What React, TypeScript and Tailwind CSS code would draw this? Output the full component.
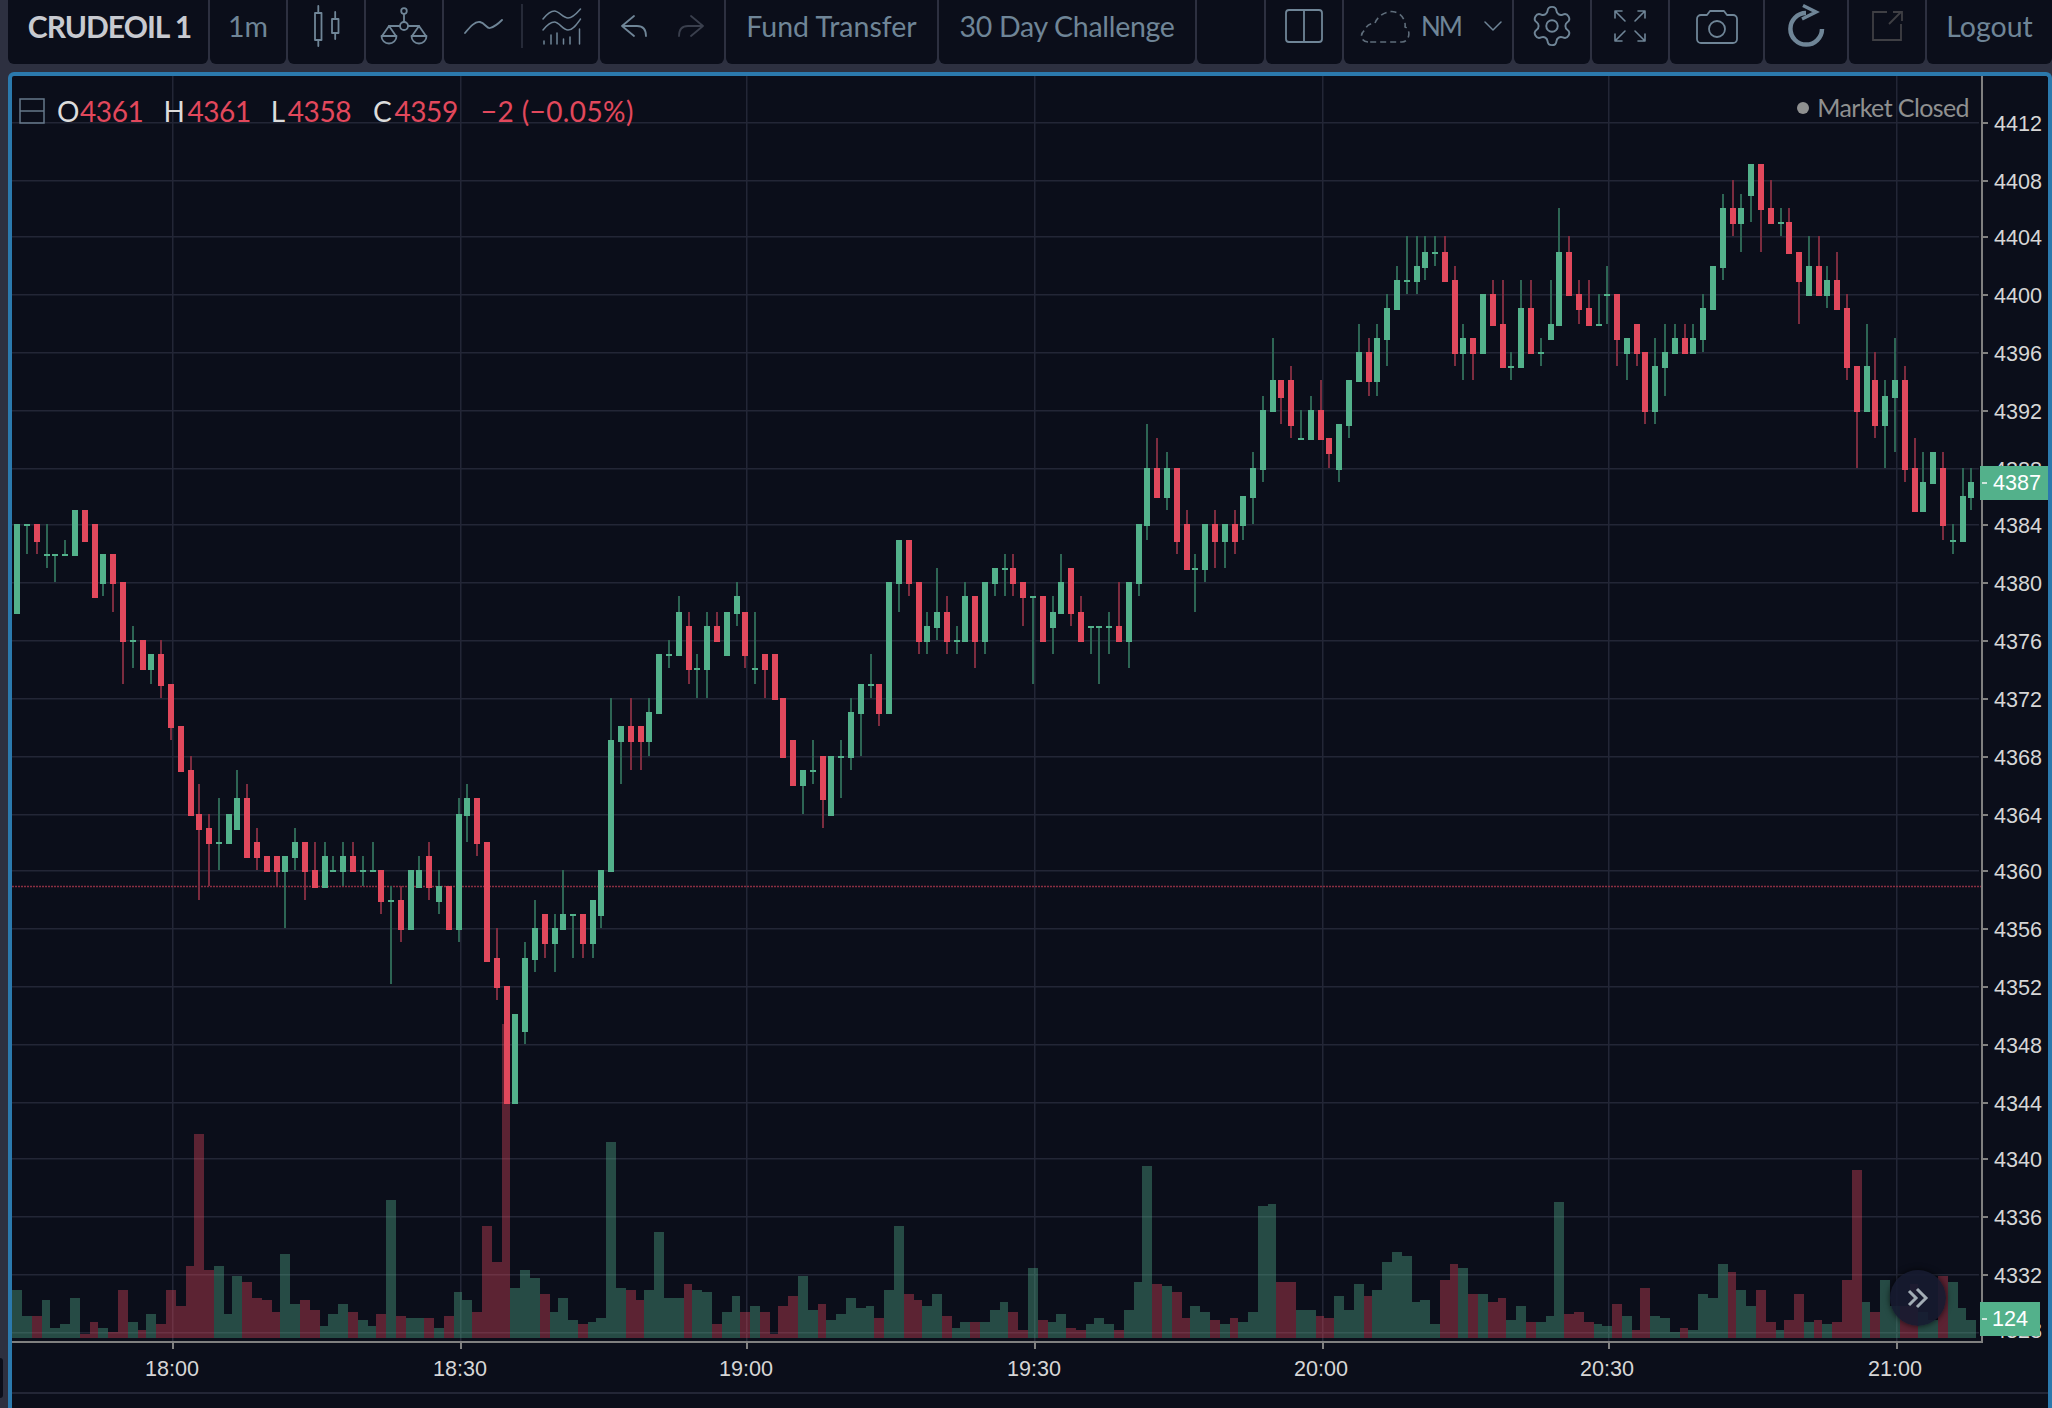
import React from "react";
import { Settings } from "lucide-react";

type C = [number, number, number, number, number?, number?];
// x, green(1)/red(0), body top, body bottom, wick top, wick bottom — in crop units, scaled per segment
const segA: C[] = [
[51,1,72,342],[81,1,72,78,72,162],[111,0,72,126,72,162],[141,1,162,168,72,204],[165,1,162,168,162,246],[195,1,162,168,120,168],[225,1,30,168],[255,0,30,126],[285,0,72,294],[309,1,162,252,162,288],[339,0,162,252,162,336],[369,0,246,426,246,552],[399,1,420,426,378,504],[429,0,420,510],[453,1,462,510,462,552],[483,0,462,558,420,594],[513,0,552,684,552,720],[543,0,678,816],[573,0,810,948,768,948],[597,0,942,990,852,1200],[627,0,984,1032,942,1158],[657,1,1026,1032,894,1110],[687,1,942,1032],[711,1,894,990,810,990],[741,0,894,1074,852,1074],[771,0,1026,1074,984,1110],[801,0,1068,1116],[831,0,1068,1116,1068,1158],[855,1,1068,1116,1068,1284],[885,1,1026,1074,984,1110],[915,0,1026,1116,1026,1200],[945,0,1110,1164,1026,1164],[975,1,1068,1164,1026,1164],[999,1,1110,1116,1068,1116],[1029,1,1068,1116,1026,1158],[1059,0,1068,1116,1026,1116],[1089,1,1110,1116,1068,1158],[1119,1,1110,1116,1026,1116],[1143,0,1110,1206,1110,1242],[1173,1,1200,1206,1158,1452],[1203,0,1200,1290,1158,1326],[1233,1,1110,1290],[1257,1,1110,1164,1068,1164],[1287,0,1068,1164,1026,1200],[1317,1,1158,1206,1110,1242],[1347,0,1158,1290],[1377,1,942,1290,894,1326],[1401,1,894,948,852,1026],[1431,0,894,1032,894,1068],[1461,0,1026,1386],
];
const segB: C[] = [
[21,0,1157,1238,1076,1270],[51,0,1233,1552],[75,1,1308,1552],[105,1,1157,1357,1114,1390],[135,1,1076,1162,1000,1195],[165,0,1038,1119,1038,1157],[195,1,1076,1119,1038,1195],[219,1,1038,1081,919,1081],[249,1,1038,1043,1038,1157],[279,0,1038,1119,1038,1157],[309,1,1000,1119,1000,1157],[333,1,919,1043,919,1076],[363,1,568,925,454,925],[393,1,530,573,530,687],[423,0,530,573,454,649],[453,0,530,573,530,649],[477,1,492,573,454,611],[507,1,335,497],[537,1,335,340,297,373],[567,1,222,341,178,341],[597,0,260,378,222,416],[621,1,373,378,335,454],[651,1,260,378,222,454],[681,0,260,303,222,303],[711,1,222,341],[741,1,178,227,141,260],[765,0,222,341,222,373],[795,1,373,378,222,416],[825,0,335,378,335,454],[855,0,335,460],[879,0,454,616],[909,0,568,692],[939,1,649,692,649,768],[969,1,649,654,568,687],[999,0,611,730,611,806],[1023,1,611,773],[1053,1,611,616,568,725],[1083,1,492,616,454,649],[1113,1,416,497,416,611],[1143,1,416,421,335,454],[1167,0,416,497,416,530],[1197,1,141,497],[1227,1,27,146,27,222],[1257,0,27,146,27,178],[1287,0,141,303,141,335],[1311,1,260,303,222,335],[1341,1,222,265,103,297],[1371,0,222,303,178,335],[1401,1,297,303,260,335],[1425,1,178,303,141,303],[1455,0,178,303,178,373],[1485,1,141,303,141,335],[1515,1,103,146,103,178],
];
const segC: C[] = [
[45,1,1014,1020,972,1098],[69,0,1014,1062,972,1098],[99,0,1056,1104,1056,1188],[129,1,1098,1104,1098,1362],[159,0,1098,1236],[189,1,1146,1194,1098,1272],[213,1,1056,1152,972,1152],[243,0,1014,1152,1014,1188],[273,0,1146,1236,1098,1236],[303,1,1188,1194,1188,1272],[327,1,1188,1194,1188,1362],[357,1,1188,1194,1146,1272],[387,0,1188,1236,1056,1236],[417,1,1056,1236,1056,1314],[447,1,882,1062,882,1098],[471,1,714,888,582,930],[501,0,714,804,624,804],[531,1,714,804,666,840],[561,0,714,936,714,972],[591,0,882,1020,840,1020],[615,1,1014,1020,972,1146],[645,1,882,1020,882,1056],[675,0,882,936,840,1014],[705,1,882,936,882,1014],[735,0,882,936,840,972],[759,1,798,888,798,930],[789,1,714,804,666,882],[819,1,540,720,498,756],[849,1,450,546,324,546],[873,0,450,504,450,582],[903,0,450,588,408,624],[933,1,624,630,540,630],[963,1,540,630,498,630],[993,0,540,630,450,630],[1017,0,624,672,624,714],[1047,1,582,720,582,756],[1077,1,450,588,450,624],[1107,1,366,456,282,456],[1137,0,366,456,324,498],[1161,1,324,456,282,498],[1191,1,234,330,192,408],[1221,1,150,240,108,240],[1251,1,150,156,18,192],[1281,1,108,156,18,192],[1305,1,66,114,18,150],[1335,1,66,72,18,108],[1365,0,66,156,18,156],[1395,0,150,372,108,408],[1419,1,324,372,282,450],[1449,0,324,372,324,450],[1479,1,192,372],[1509,0,192,288,150,288],
];
const segD: C[] = [
[39,0,522,654,390,654],[63,1,648,654,606,690],[93,1,474,654,390,654],[123,0,474,612,390,612],[153,1,606,612,564,648],[183,1,522,570,390,570],[207,1,306,528,174,528],[237,0,306,438,258,438],[267,0,432,480,390,522],[297,0,474,528,390,528],[327,1,522,528,432,528],[351,1,432,438,348,522],[381,0,432,570,432,648],[411,1,564,612,564,690],[441,0,522,612,522,648],[465,0,606,786,606,822],[495,1,648,786,564,822],[525,1,606,654,522,738],[555,1,564,612,522,612],[585,0,564,612,522,612],[609,1,564,612,522,612],[639,1,474,570,432,606],[669,1,348,480],[699,1,174,354,132,390],[729,0,174,222,90,258],[753,1,174,222,132,306],[783,1,42,138,42,216],[813,0,42,180,42,306],[843,0,174,222,90,222],[873,1,216,222,174,258],[897,0,216,312,174,312],[927,0,306,396,306,522],[957,1,348,438,258,438],[987,0,348,438,258,438],[1011,1,390,438,348,474],[1041,0,390,480,306,480],[1071,0,474,654,432,690],[1101,0,648,786,648,954],[1131,1,648,786,522,786],[1155,0,690,828,606,864],[1185,1,738,828,690,954],[1215,1,690,744,564,906],[1245,0,690,960,648,996],[1275,0,954,1086,864,1086],[1299,1,996,1086,906,1086],[1329,1,906,1002],[1359,0,954,1128,906,1170],[1389,1,1170,1176,1122,1212],[1419,1,1038,1176,954,1176],[1443,1,996,1044,954,1080],
];
const candleSegs: { c: C[]; ox: number; oy: number; sy: number }[] = [
  { c: segA, ox: 0, oy: 500, sy: 3 },
  { c: segB, ox: 490, oy: 530, sy: 1568 / 580 },
  { c: segC, ox: 990, oy: 230, sy: 3 },
  { c: segD, ox: 1490, oy: 150, sy: 3 },
];

type V = [number, number, number, number];
const v1: V[] = [
[32,58,1,570],[58,84,1,648],[84,110,0,648],[110,131,1,600],[131,157,1,684],[157,183,1,672],[183,209,1,594],[209,235,0,702],[235,256,0,666],[256,282,1,684],[282,308,0,696],[308,335,0,570],[335,361,1,666],[361,382,0,690],[382,408,1,642],[408,434,0,672],[434,460,0,570],[460,486,0,618],[486,507,0,498],[507,533,0,102],[533,559,0,510],[559,585,1,498],[585,606,1,642],[606,632,1,528],[632,659,0,546],[659,685,0,594],[685,711,0,600],[711,732,0,636],[732,758,1,462],[758,784,1,612],[784,810,0,600],[810,836,0,630],[836,857,1,678],[857,883,1,642],[883,909,1,612],[909,936,0,636],[936,962,1,660],[962,983,1,678],[983,1009,0,642],[1009,1035,1,300],[1035,1061,0,648],[1061,1107,1,654],[1107,1133,0,654],[1133,1160,1,684],[1160,1186,0,648],[1186,1207,1,576],[1207,1233,1,600],[1233,1260,0,636],[1260,1286,0,378],[1286,1312,0,486],[1312,1333,0,-228],[1333,1359,1,564],[1359,1385,1,510],[1385,1411,1,534],[1411,1437,0,582],[1437,1458,1,636],[1458,1484,1,594],[1484,1511,1,660],[1511,1537,0,672],[1537,1558,1,666],
];
const v2: V[] = [
[13,36,1,564],[36,58,1,36],[58,81,1,474],[81,103,0,480],[103,121,0,510],[121,143,1,480],[143,166,1,306],[166,211,1,504],[211,228,0,462],[228,251,1,480],[251,273,1,486],[273,296,0,582],[296,318,1,546],[318,336,1,498],[336,358,0,546],[358,381,1,528],[381,403,0,546],[403,421,0,612],[421,444,0,528],[444,466,0,498],[466,488,1,438],[488,511,1,540],[511,529,0,522],[529,551,1,570],[551,573,1,552],[573,596,1,504],[596,618,1,534],[618,636,1,528],[636,659,0,564],[659,681,1,480],[681,703,1,288],[703,726,0,492],[726,744,0,510],[744,766,1,528],[766,788,1,492],[788,811,0,558],[811,829,1,594],[829,851,1,576],[851,874,0,576],[874,896,1,576],[896,918,1,540],[918,936,1,516],[936,959,0,546],[959,981,0,600],[981,1004,1,414],[1004,1026,0,570],[1026,1044,1,576],[1044,1066,1,552],[1066,1089,0,594],[1089,1111,0,600],[1111,1129,1,582],[1129,1151,1,564],[1151,1174,1,582],[1174,1196,0,600],[1196,1219,1,540],[1219,1236,1,456],[1236,1259,1,108],[1259,1281,0,462],[1281,1304,1,468],[1304,1326,0,486],[1326,1344,0,564],[1344,1366,1,528],[1366,1389,1,546],[1389,1411,0,570],[1411,1434,1,582],[1434,1452,0,564],[1452,1474,1,576],[1474,1496,1,546],[1496,1519,1,228],[1519,1537,1,222],[1537,1581,0,456],
];
const v3: V[] = [
[36,81,1,540],[81,99,0,558],[99,121,0,564],[121,143,1,498],[143,166,1,540],[166,188,1,462],[188,206,0,498],[206,228,1,480],[228,251,1,396],[251,273,1,366],[273,296,1,378],[296,314,1,516],[314,336,1,510],[336,358,1,582],[358,381,0,450],[381,399,0,402],[399,421,1,414],[421,444,0,492],[444,466,1,492],[466,488,0,516],[488,506,0,504],[506,529,1,570],[529,551,1,528],[551,573,0,576],[573,596,1,576],[596,614,1,558],[614,636,1,216],[636,659,0,552],[659,681,0,546],[681,703,0,576],[703,721,1,582],[721,744,1,588],[744,766,0,522],[766,788,1,558],[788,806,0,600],[806,829,0,474],[829,851,1,558],[851,874,1,564],[874,896,1,606],[896,914,0,594],[914,936,1,600],[936,959,1,492],[959,981,1,504],[981,1004,1,402],[1004,1021,0,426],[1021,1044,1,480],[1044,1066,1,528],[1066,1089,0,480],[1089,1111,0,576],[1111,1129,1,600],[1129,1151,0,570],[1151,1174,0,492],[1174,1196,1,576],[1196,1214,0,570],[1214,1236,1,582],[1236,1259,0,576],[1259,1281,0,450],[1281,1304,0,120],
];
const v4: V[] = [
[186,210,1,306],[210,240,0,336],[240,270,1,240],[270,300,1,318],[300,330,0,318],[330,354,0,252],[354,384,1,336],[384,414,1,360],[414,444,0,228],[444,474,1,246],[474,498,1,324],[498,528,1,360],
];
const volSegs = [
  { v: v1, ox: 0, oy: 1100, sx: 1568 / 600 },
  { v: v2, ox: 590, oy: 1130, sx: 1568 / 700 },
  { v: v3, ox: 1280, oy: 1130, sx: 1568 / 700 },
  { v: v4, ox: 1800, oy: 1200, sx: 3 },
];

const gridY = [123,181,237,295,353,411,469,525,583,641,699,757,815,871,929,987,1045,1103,1159,1217,1275,1333];
const prices = [4412,4408,4404,4400,4396,4392,4388,4384,4380,4376,4372,4368,4364,4360,4356,4352,4348,4344,4340,4336,4332,4328];
const gridX = [173,461,747,1035,1323,1609,1897];
const times: [number, string][] = [[172,"18:00"],[460,"18:30"],[746,"19:00"],[1034,"19:30"],[1321,"20:00"],[1607,"20:30"],[1895,"21:00"]];

const UP = "#53b18b";
const DOWN = "#e2485c";
const ICON = "#6f8597";

function Chart() {
  return (
    <svg width={1969} height={1265} viewBox="12 76 1969 1265" className="block shrink-0">
      {gridY.map((y) => <rect key={y} x={12} y={y - 1} width={1967} height={1.5} fill="#232636" />)}
      {gridX.map((x) => <rect key={x} x={x - 1} y={76} width={1.5} height={1265} fill="#232636" />)}
      {volSegs.flatMap((s, i) =>
        s.v.map((b, j) => {
          const x0 = Math.round(s.ox + b[0] / s.sx);
          const x1 = Math.round(s.ox + b[1] / s.sx);
          const top = Math.round(s.oy + b[3] / 3);
          return <rect key={`v${i}-${j}`} x={x0} y={top} width={x1 - x0} height={1338 - top} fill={b[2] ? UP : DOWN} fillOpacity={0.38} />;
        })
      )}
      <line x1={12} x2={1981} y1={886.5} y2={886.5} stroke="#8a2f42" strokeWidth={1.6} strokeDasharray="2 1" />
      {candleSegs.flatMap((s, i) =>
        s.c.map((c, j) => {
          const cx = Math.round(s.ox + c[0] / 3);
          const yy = (v: number) => Math.round(s.oy + v / s.sy);
          const bt = yy(c[2]);
          const bb = Math.max(yy(c[3]), bt + 2);
          const hasW = c[4] !== undefined;
          return (
            <g key={`c${i}-${j}`}>
              {hasW && <rect x={cx - 1} y={yy(c[4] as number)} width={2} height={yy(c[5] as number) - yy(c[4] as number)} fill={c[1] ? "#2d6554" : "#7c2c3f"} />}
              <rect x={cx - 3} y={bt} width={6} height={bb - bt} fill={c[1] ? UP : DOWN} />
            </g>
          );
        })
      )}
    </svg>
  );
}

function PriceAxis() {
  return (
    <svg width={65} height={1267} viewBox="1983 76 65 1267" className="block shrink-0">
      {gridY.map((y, i) => (
        <g key={y}>
          <rect x={1983} y={y - 1} width={5} height={2} fill="#808080" />
          <text x={2018} y={i === gridY.length - 1 ? y + 5 : y + 8} textAnchor="middle" className="fill-[#d6d6d6] text-[21.6px] font-['Liberation_Sans',Arial,sans-serif]">{prices[i]}</text>
        </g>
      ))}
    </svg>
  );
}

function TimeAxis() {
  return (
    <svg width={2036} height={49} viewBox="12 1343 2036 49" className="block">
      {gridX.map((x) => <rect key={x} x={x - 1} y={1343} width={2} height={6} fill="#808080" />)}
      {times.map(([x, t]) => (
        <text key={t} x={x} y={1376} textAnchor="middle" className="fill-[#d6d6d6] text-[21.6px] font-['Liberation_Sans',Arial,sans-serif]">{t}</text>
      ))}
    </svg>
  );
}

const common = { fill: "none", stroke: ICON, strokeWidth: 1.8, strokeLinecap: "round" as const, strokeLinejoin: "round" as const };

function I({ x, y, w, h, children, className }: { x: number; y: number; w: number; h: number; children: React.ReactNode; className?: string }) {
  return (
    <svg width={w} height={h} viewBox={`${x} ${y} ${w} ${h}`} className={"block shrink-0 " + (className ?? "")}>
      {children}
    </svg>
  );
}

function Panel({ w, children, className }: { w: string; children?: React.ReactNode; className?: string }) {
  return <div className={`${w} h-full shrink-0 rounded-b-md bg-[#0b0e1a] pb-3 flex items-center justify-center ${className ?? ""}`}>{children}</div>;
}

const label = "font-['Lato','Noto_Sans',sans-serif] text-[#6f8597] text-[28.5px] leading-none";

export default function App() {
  return (
    <div className="relative h-[1408px] w-[2052px] overflow-hidden bg-[#2d3040] flex flex-col">
      <div className="absolute left-0 top-[1358px] h-[40px] w-[3px] rounded-r-md bg-[#0b0e1a]" />
      <div className="flex h-[64px] shrink-0 gap-[2px] pl-2">
        <Panel w="w-[200px]">
          <span className="ml-[3px] font-['Lato','Noto_Sans',sans-serif] text-[30px] font-bold leading-none tracking-[-1px] text-[#c8cad0]">CRUDEOIL 1</span>
        </Panel>
        <Panel w="w-[76px]"><span className={label}>1m</span></Panel>
        <Panel w="w-[76px]">
          <I x={313} y={5} w={27} h={42}>
            <g {...common}>
              <rect x={315} y={13} width={6.5} height={27} />
              <path d="M318.3 6V13M318.3 40V46" />
              <rect x={332} y={19} width={6.5} height={14} />
              <path d="M335.2 12V19M335.2 33V39" />
            </g>
          </I>
        </Panel>
        <Panel w="w-[76px]">
          <I x={379} y={6} w={48} h={38}>
            <g {...common}>
              <circle cx={403} cy={10} r={2.8} />
              <path d="M403 13V21" />
              <circle cx={403} cy={25} r={4} />
              <path d="M399 25H388M407 25H418" />
              <path d="M388 25L381 35M388 25L395 35M418 25L411 35M418 25L425 35" />
              <path d="M380.5 35H395.5A7.5 7.5 0 0 1 380.5 35Z" />
              <path d="M410.5 35H425.5A7.5 7.5 0 0 1 410.5 35Z" />
            </g>
          </I>
        </Panel>
        <Panel w="w-[154px]" className="justify-start">
          <I x={464} y={18} w={40} h={17} className="ml-[20px]">
            <path {...common} d="M465 33C470 27 475 21 480 22C485 23 487 29 490 28C494 27 498 24 502 20" />
          </I>
          <div className="ml-[17px] h-[44px] w-[2px] bg-[#262a38]" />
          <I x={540} y={7} w={41} h={37} className="ml-[18px]">
            <g {...common} strokeWidth={1.5}>
              <path d="M542 18C546 13 550 10 553.5 10C558 10 562 17 567 17C572 17 576 12 579.5 8" />
              <path d="M542 29C546 24 550 21 553.5 21C558 21 562 29 567 29C572 29 576 23 579.5 18" />
              <path d="M543 40V43M550 34V43M556 32V43M562.5 38V43M569 36V43M578.5 28V43" />
            </g>
          </I>
        </Panel>
        <Panel w="w-[124px]" className="justify-start">
          <I x={620} y={13} w={28} h={24} className="ml-[20px]">
            <path {...common} d="M634 15L622 25L634 35M622 25H637C643 25 646 29 646 35" />
          </I>
          <I x={676} y={13} w={28} h={24} className="ml-[28px]">
            <path {...common} stroke="#3a3f4d" d="M691 15L703 25L691 35M703 25H688C682 25 679 29 679 35" />
          </I>
        </Panel>
        <Panel w="w-[211px]"><span className={label}>Fund Transfer</span></Panel>
        <Panel w="w-[256px]"><span className={`${label} tracking-[-0.3px]`}>30 Day Challenge</span></Panel>
        <Panel w="w-[67px]" />
        <Panel w="w-[76px]">
          <I x={1285} y={8} w={40} h={35}>
            <rect {...common} x={1287} y={9} width={36} height={32} rx={3} />
            <path {...common} d="M1305 9V41" />
          </I>
        </Panel>
        <Panel w="w-[168px]" className="justify-start">
          <I x={1360} y={8} w={50} h={35} className="ml-[16px]">
            <path {...common} stroke="#5f6d7b" strokeWidth={1.6} strokeLinecap="butt" strokeDasharray="6 4" d="M1368 41C1361 41 1359 33 1365 29C1366 24 1372 22 1375 22C1378 14 1388 9 1395 11C1402 13 1406 20 1405 26C1411 28 1410 41 1402 41Z" />
          </I>
          <span className="ml-[11px] w-[63px] font-['Lato','Noto_Sans',sans-serif] text-[26px] leading-none tracking-[-2px] text-[#6f8597]">NM</span>
          <I x={1483} y={21} w={18} h={12}>
            <path {...common} strokeWidth={1.5} d="M1484 23L1492 31L1500 23" />
          </I>
        </Panel>
        <Panel w="w-[76px]">
          <Settings size={46} strokeWidth={1} color={ICON} />
        </Panel>
        <Panel w="w-[76px]">
          <I x={1613} y={9} w={34} h={34}>
            <g {...common} strokeWidth={1.6}>
              <path d="M1615 18V11H1622M1615 11L1625 21" />
              <path d="M1645 18V11H1638M1645 11L1635 21" />
              <path d="M1615 34V41H1622M1615 41L1625 31" />
              <path d="M1645 34V41H1638M1645 41L1635 31" />
            </g>
          </I>
        </Panel>
        <Panel w="w-[93px]">
          <I x={1693} y={9} w={44} h={35}>
            <g {...common}>
              <path d="M1699 15H1705L1708 11H1722L1725 15H1731A4 4 0 0 1 1735 19V39A4 4 0 0 1 1731 43H1699A4 4 0 0 1 1695 39V19A4 4 0 0 1 1699 15Z" />
              <circle cx={1715} cy={29} r={8} />
            </g>
          </I>
        </Panel>
        <Panel w="w-[82px]">
          <I x={1785} y={1} w={40} h={46}>
            <path fill="none" stroke={ICON} strokeWidth={4.5} d="M1805 11A15.8 15.8 0 1 0 1821 27" />
            <path fill="none" stroke={ICON} strokeWidth={3.5} d="M1802 3.5L1815 10L1801 17" />
          </I>
        </Panel>
        <Panel w="w-[76px]">
          <I x={1869} y={11} w={33} h={32}>
            <path {...common} stroke="#3f3f44" strokeLinecap="butt" strokeLinejoin="miter" d="M1885 13H1871V41H1899V25M1887 25L1899 13M1891 13H1900V22" />
          </I>
        </Panel>
        <Panel w="w-[125px]"><span className={label}>Logout</span></Panel>
      </div>

      <div className="relative ml-2 mt-2 flex flex-1 flex-col overflow-hidden rounded-t-md border-x-4 border-t-4 border-[#2b79ad] bg-[#0b0e1a]">
        <div className="flex">
          <div>
            <div className="border-b-2 border-[#808080]"><Chart /></div>
          </div>
          <div className="border-l-2 border-[#808080]"><PriceAxis /></div>
        </div>
        <div className="h-[49px]"><TimeAxis /></div>
        <div className="h-[2px] bg-[#232636]" />

        <div className="absolute left-[7px] top-[21px] flex items-center font-['Lato','Noto_Sans',sans-serif] text-[28px] leading-none tracking-[-0.4px] text-[#dcdcdc]">
          <svg width={26} height={26} viewBox="0 0 26 26" className="mr-[12px] block">
            <rect x={1} y={1} width={24} height={24} fill="none" stroke="#66788a" strokeWidth={1.5} />
            <path d="M1 13H25" stroke="#66788a" strokeWidth={1.5} />
          </svg>
          <span>O</span><span className="ml-[1px] text-[#e2485c]">4361</span>
          <span className="ml-[20px]">H</span><span className="ml-[3px] text-[#e2485c]">4361</span>
          <span className="ml-[20px]">L</span><span className="ml-[3px] text-[#e2485c]">4358</span>
          <span className="ml-[22px]">C</span><span className="ml-[3px] text-[#e2485c]">4359</span>
          <span className="ml-[23px] tracking-[0.4px] text-[#e2485c]">−2 (−0.05%)</span>
        </div>

        <div className="absolute right-[79px] top-[19px] flex items-center gap-[8px] font-['Lato','Noto_Sans',sans-serif] text-[25px] leading-none tracking-[-0.6px] text-[#8f9090]">
          <span className="h-[12px] w-[12px] rounded-full bg-[#8f9090]" />
          <span>Market Closed</span>
        </div>

        <div className="absolute left-[1968px] top-[390px] flex h-[34px] w-[68px] items-center justify-center bg-[#53b18b] pl-[6px] font-['Liberation_Sans',Arial,sans-serif] text-[21.6px] text-white">
          <span className="absolute left-[2px] top-[16px] h-[2px] w-[5px] bg-[#cfe6dc]" />
          4387
        </div>
        <div className="absolute left-[1968px] top-[1226px] flex h-[34px] w-[60px] items-center justify-center bg-[#53b18b] font-['Liberation_Sans',Arial,sans-serif] text-[21.6px] text-white">
          <span className="absolute left-[2px] top-[16px] h-[2px] w-[5px] bg-[#cfe6dc]" />
          124
        </div>

        <div className="absolute left-[1878px] top-[1194px] flex h-[56px] w-[56px] items-center justify-center rounded-full bg-[#161b30]/90 shadow-[0_0_6px_rgba(0,0,0,0.7)]">
          <svg width={24} height={24} viewBox="0 0 24 24">
            <path d="M3 5L10 12L3 19M11 3L20 12L11 21" fill="none" stroke="#a3adb5" strokeWidth={3} />
          </svg>
        </div>
      </div>
    </div>
  );
}
